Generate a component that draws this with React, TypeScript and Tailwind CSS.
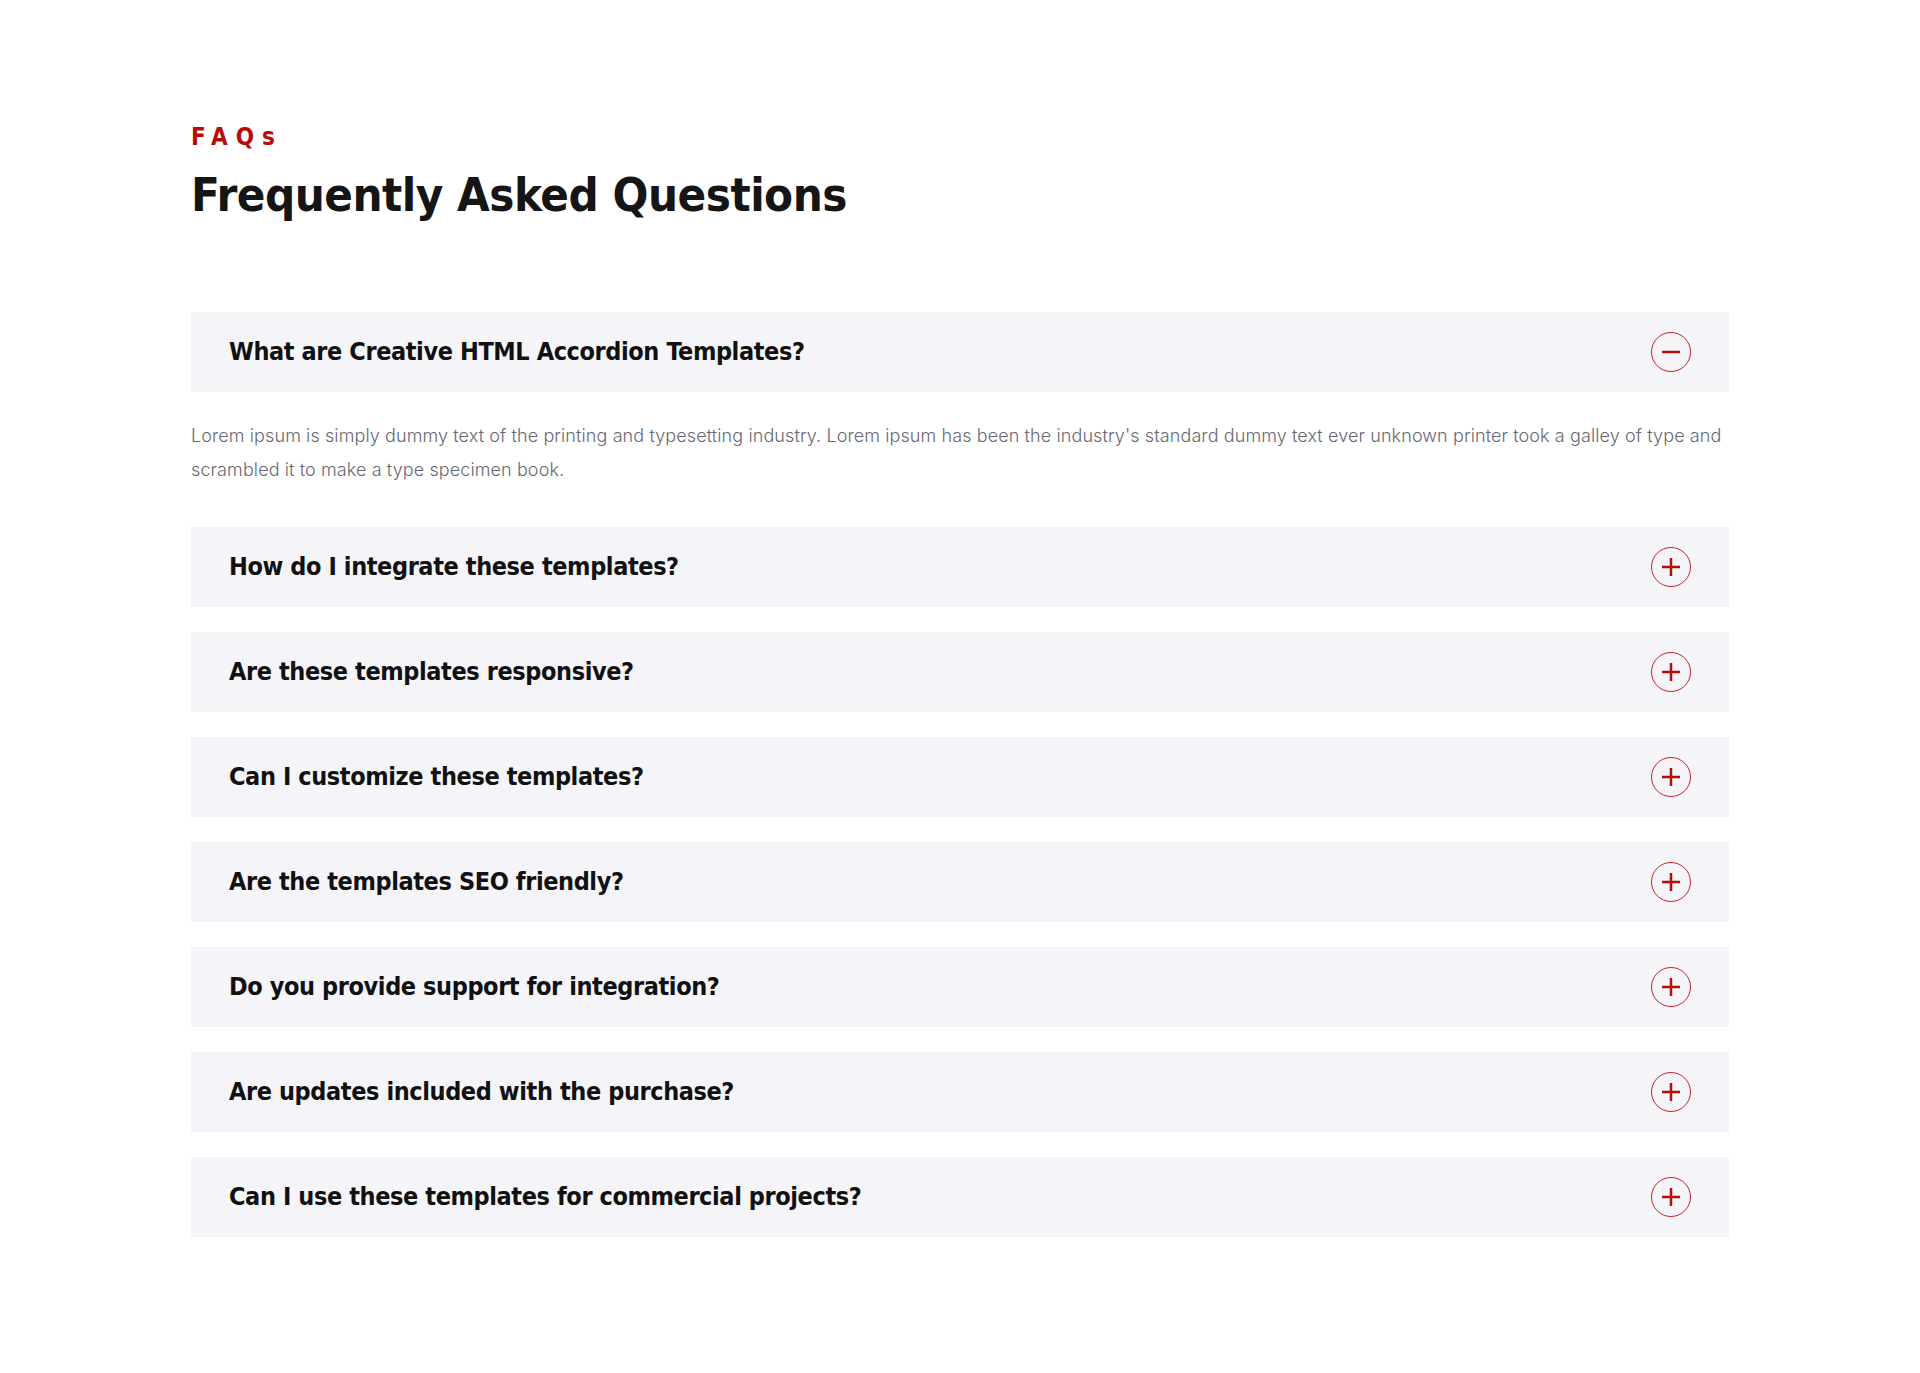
import { useState } from 'react';

const answer =
  "Lorem ipsum is simply dummy text of the printing and typesetting industry. Lorem ipsum has been the industry's standard dummy text ever unknown printer took a galley of type and scrambled it to make a type specimen book.";

const faqs = [
  'What are Creative HTML Accordion Templates?',
  'How do I integrate these templates?',
  'Are these templates responsive?',
  'Can I customize these templates?',
  'Are the templates SEO friendly?',
  'Do you provide support for integration?',
  'Are updates included with the purchase?',
  'Can I use these templates for commercial projects?',
];

const display = "font-['Liberation_Sans_Narrow','DejaVu_Sans_Condensed','Roboto_Condensed','Liberation_Sans',sans-serif]";

function ToggleIcon({ open }: { open: boolean }) {
  return (
    <span className="flex h-10 w-10 shrink-0 items-center justify-center rounded-full border border-[#c4262a]">
      <svg width="18" height="18" viewBox="0 0 18 18" fill="none">
        <path d="M0 9h18" stroke="#b80c0c" strokeWidth="2.5" />
        {!open && <path d="M9 0v18" stroke="#b80c0c" strokeWidth="2.5" />}
      </svg>
    </span>
  );
}

export default function App() {
  const [openIdx, setOpenIdx] = useState<number | null>(0);

  return (
    <div className="min-h-[1373px] bg-white">
      <section className="mx-auto w-[1538px] pt-[124px] pb-[138px]">
        <p className={`${display} text-[24px] font-bold leading-[26px] tracking-[8px] text-[#b80c0c]`}>FAQs</p>
        <h2 className={`${display} mt-[14px] text-[47px] font-bold leading-[62px] tracking-[-0.5px] text-[#151515]`}>
          Frequently Asked Questions
        </h2>

        <div className="mt-[86px] flex flex-col gap-[25px]">
          {faqs.map((q, i) => {
            const open = openIdx === i;
            return (
              <div key={q}>
                <button
                  type="button"
                  onClick={() => setOpenIdx(open ? null : i)}
                  className="flex h-20 w-full items-center justify-between bg-[#f4f4f9] pl-[38px] pr-[38px] text-left"
                >
                  <span className={`${display} text-[25px] font-bold tracking-[-0.4px] text-[#111111]`}>{q}</span>
                  <ToggleIcon open={open} />
                </button>
                {open && (
                  <p className="pt-[27px] pb-[15px] font-['Inter','Open_Sans',sans-serif] text-[18px] leading-[34px] font-light tracking-[0.1px] text-[#686874]">
                    {answer}
                  </p>
                )}
              </div>
            );
          })}
        </div>
      </section>
    </div>
  );
}
